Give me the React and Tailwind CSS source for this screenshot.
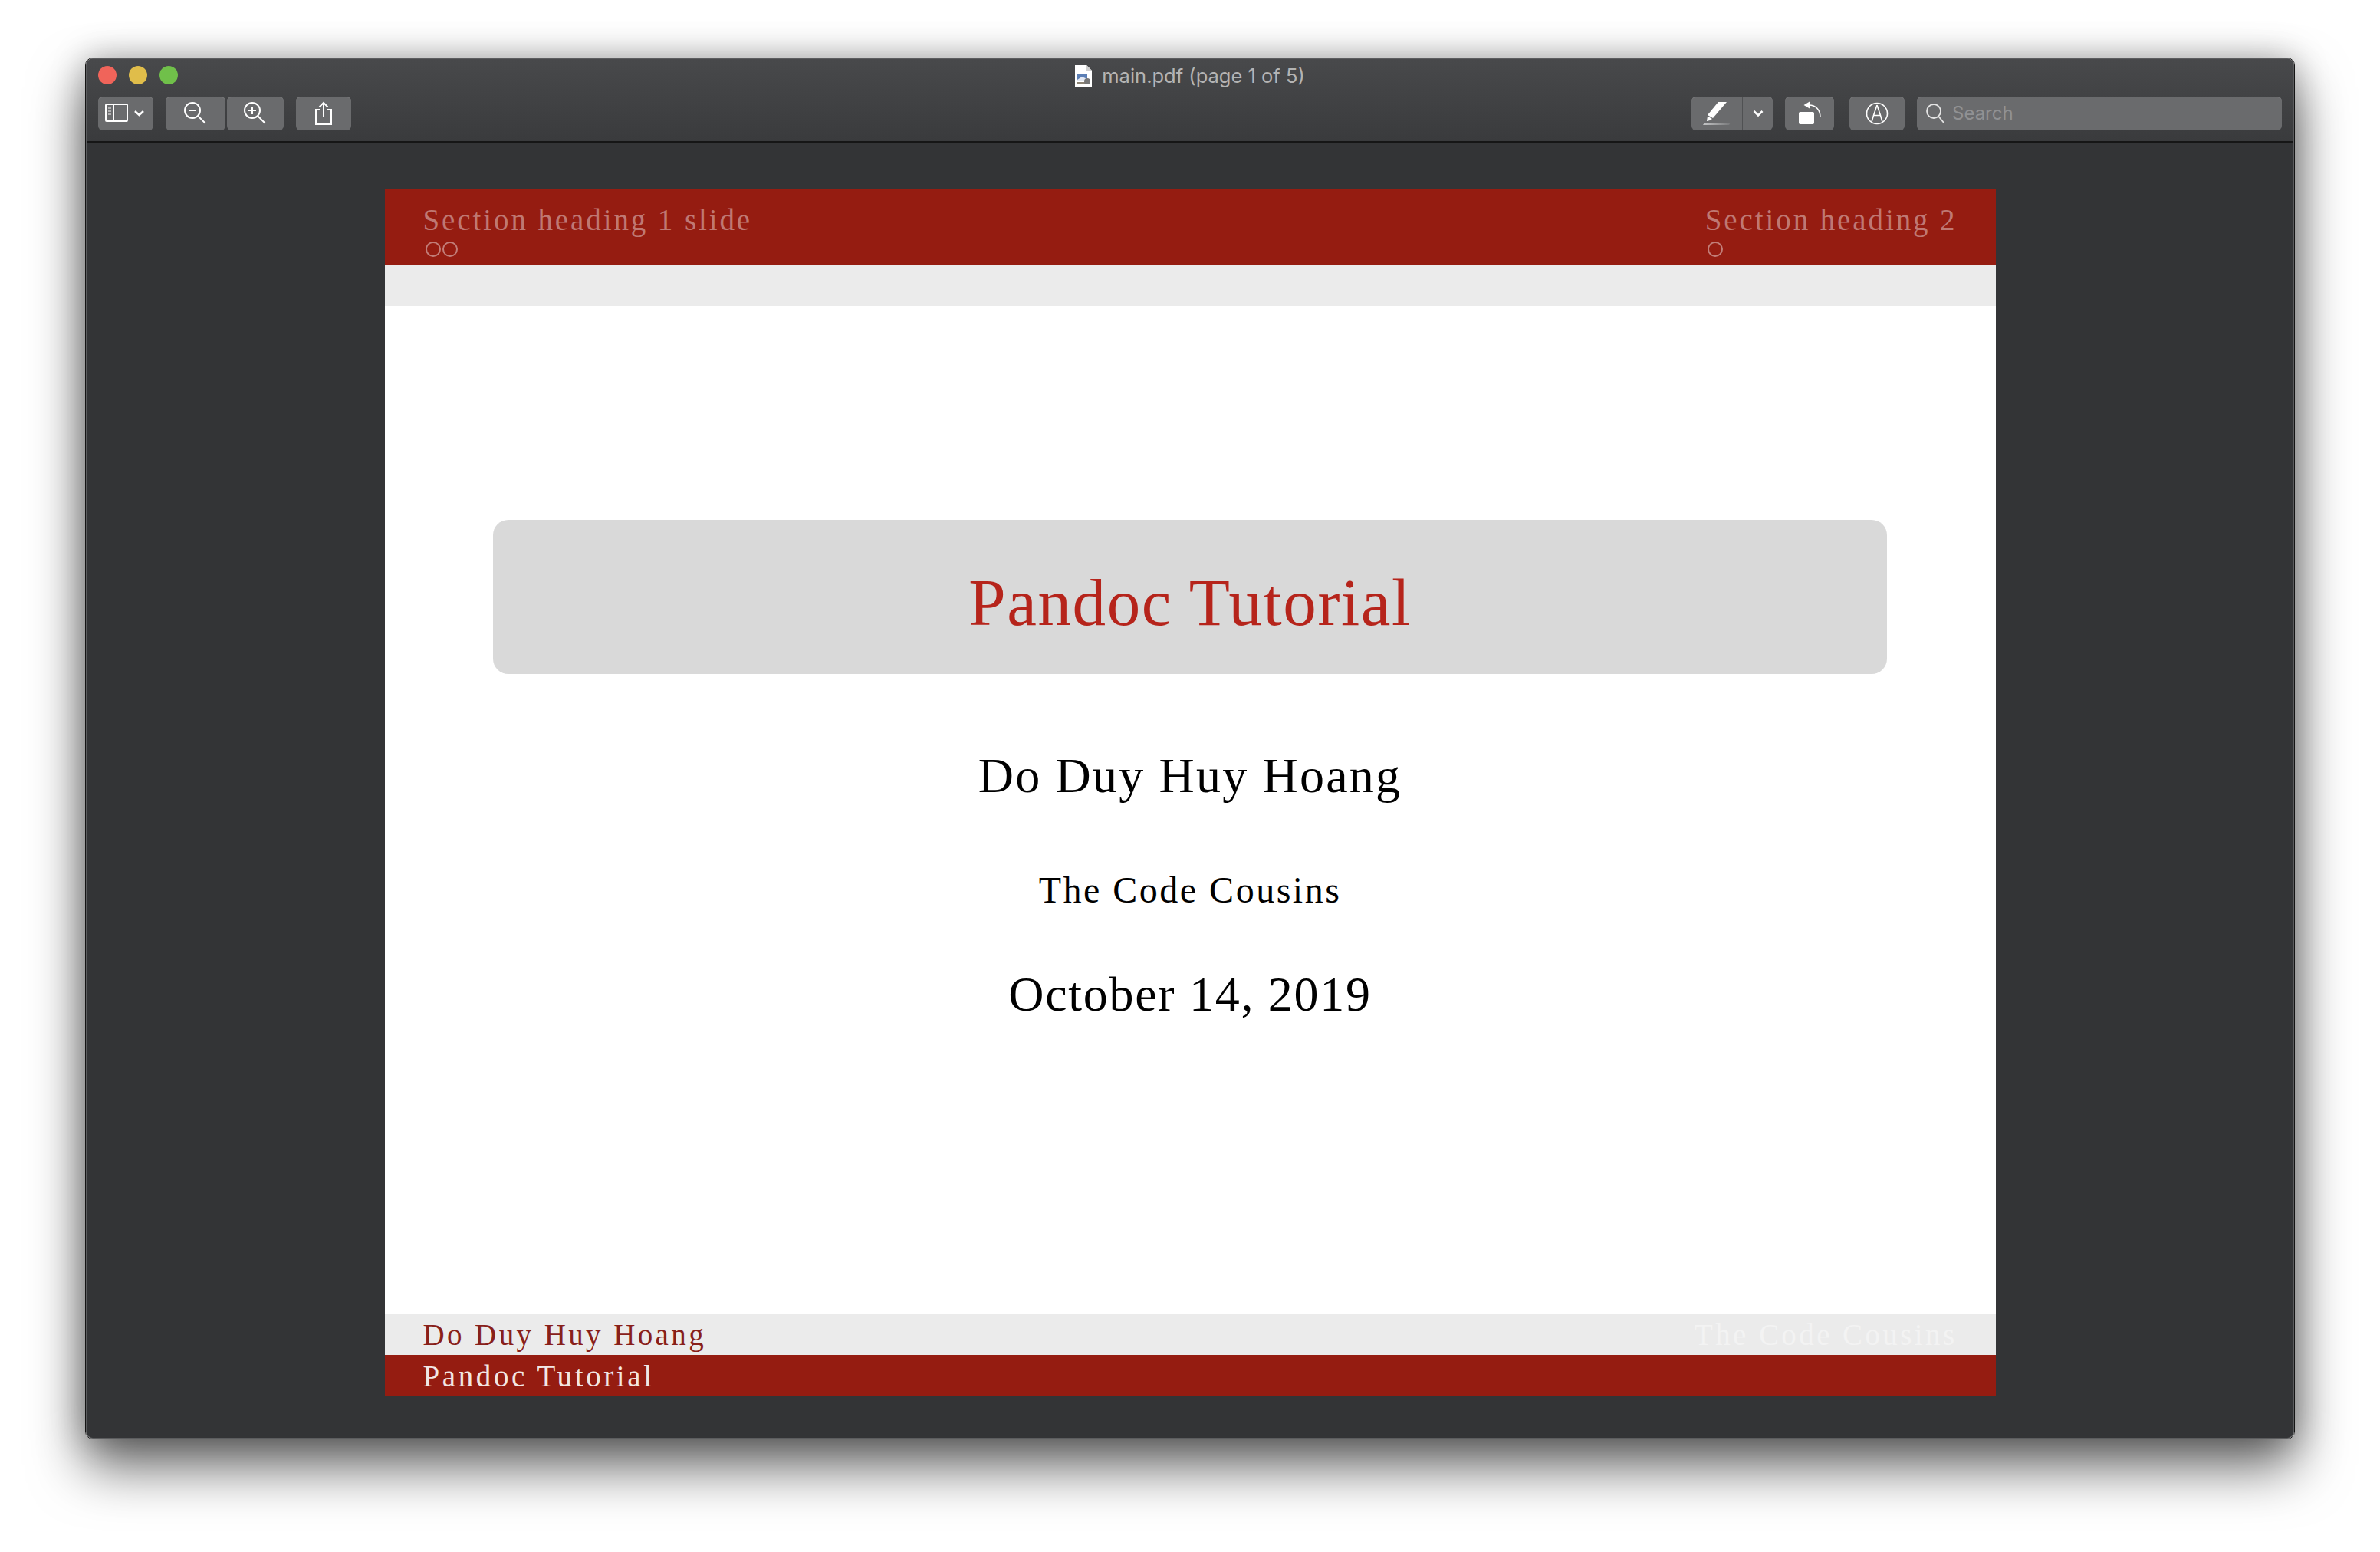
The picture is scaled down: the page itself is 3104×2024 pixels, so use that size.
import React from 'react';

const cm = "font-['Liberation_Serif',serif]";

const ToolBtn = ({ className = '', children }) => (
  <div className={`h-[44px] rounded-[6px] bg-[#6a6b6d] shadow-[inset_0_1px_0_#77787a] flex items-center justify-center ${className}`}>
    {children}
  </div>
);

const SidebarIcon = () => (
  <svg width="54" height="28" viewBox="0 0 54 28" fill="none" stroke="#fff">
    <rect x="1" y="2" width="28" height="22" rx="1" strokeWidth="2" />
    <path d="M11 2v22" strokeWidth="2" />
    <path d="M4 7h4M4 11h4M4 15h4" strokeWidth="1.6" stroke="#c9c9c9" />
    <path d="M39 11l5.5 5 5.5-5" strokeWidth="2.6" />
  </svg>
);

const ZoomIcon = ({ plus }) => (
  <svg width="32" height="32" viewBox="0 0 32 32" fill="none" stroke="#fff" strokeWidth="2">
    <circle cx="12" cy="12" r="10" />
    <path d="M19.5 19.5L29 29" />
    <path d="M7 12h10" />
    {plus && <path d="M12 7v10" />}
  </svg>
);

const ShareIcon = () => (
  <svg width="24" height="32" viewBox="0 0 24 32" fill="none" stroke="#fff" strokeWidth="2">
    <path d="M7 11H2v19h20V11h-5" />
    <path d="M12 21V2M6.5 7.5L12 2l5.5 5.5" />
  </svg>
);

const HighlightIcon = () => (
  <svg width="38" height="32" viewBox="0 0 38 32">
    <defs>
      <linearGradient id="hl" x1="0" x2="1" y1="0" y2="0">
        <stop offset="0" stopColor="#c4c5c6" />
        <stop offset="1" stopColor="#77787a" />
      </linearGradient>
    </defs>
    <path d="M21 1h11L14 22l-7-4z" fill="#fff" />
    <path d="M7 19.5l6 3.5-3 2-4 1z" fill="#fff" />
    <path d="M3 28h34l-2 3H1z" fill="url(#hl)" />
  </svg>
);

const Chevron = () => (
  <svg width="14" height="10" viewBox="0 0 14 10" fill="none" stroke="#fff" strokeWidth="2.6">
    <path d="M1.5 2l5.5 5.5L12.5 2" />
  </svg>
);

const RotateIcon = () => (
  <svg width="30" height="32" viewBox="0 0 30 32" fill="none">
    <rect x="1" y="14" width="20" height="16" rx="2" fill="#fff" />
    <path d="M14 5c9 0 15 6 15 16" stroke="#fff" strokeWidth="1.6" />
    <path d="M15 0.5v9L7.5 5z" fill="#fff" />
  </svg>
);

const MarkupIcon = () => (
  <svg width="30" height="30" viewBox="0 0 30 30" fill="none" stroke="#fff" strokeWidth="1.6">
    <circle cx="15" cy="15" r="13.5" />
    <path d="M15 4L10.5 17.5 8 26M15 4l4.5 13.5L22 26M10.5 17.5h9" />
  </svg>
);

const SearchIcon = () => (
  <svg width="26" height="28" viewBox="0 0 26 28" fill="none" stroke="#e4e4e4" strokeWidth="1.8">
    <circle cx="11" cy="11" r="9" />
    <path d="M17.5 18L24 26" />
  </svg>
);

const FileIcon = () => (
  <svg width="22" height="29" viewBox="0 0 22 29" className="shrink-0">
    <path d="M0 0h15l7 7v22H0z" fill="#fff" />
    <path d="M15 0l7 7h-7z" fill="#cfcfcf" />
    <rect x="3" y="12" width="13" height="9" fill="#5c7fb5" />
    <path d="M3 19l6-4 7 3v3H3z" fill="#e3e8f2" />
    <rect x="3" y="22" width="14" height="3" fill="#8c8474" />
    <circle cx="16" cy="21" r="4" fill="#777" />
  </svg>
);

const Rings = ({ count }) => (
  <div className="flex gap-[2px] ml-[3px] mt-[9px]">
    {Array.from({ length: count }).map((_, i) => (
      <div key={i} className="w-[20px] h-[20px] rounded-full border-[2px] border-[#c27e79]" />
    ))}
  </div>
);

const App = () => {
  return (
    <div className="w-[3104px] h-[2024px] bg-white overflow-hidden pl-[111px] pt-[75px]">
      <div className="w-[2882px] h-[1802px] rounded-[10px] border border-[#141414] shadow-[0_36px_70px_rgba(0,0,0,0.6),0_0_44px_rgba(0,0,0,0.28)]">
        <div className="w-full h-full flex flex-col rounded-[9px] overflow-hidden border border-[#5c5d5f] bg-[#333436]">
          {/* title + toolbar */}
          <div className="h-[109px] shrink-0 bg-gradient-to-b from-[#48494b] to-[#3a3b3d] border-b-[2px] border-[#161616] px-[15px] flex flex-col">
            <div className="h-[49px] shrink-0 relative flex items-center justify-center pb-[5px]">
              <div className="absolute left-[0px] top-[9px] flex gap-[16px]">
                <div className="w-[24px] h-[24px] rounded-full bg-[#f0645a]" />
                <div className="w-[24px] h-[24px] rounded-full bg-[#e0bd4a]" />
                <div className="w-[24px] h-[24px] rounded-full bg-[#70c04a]" />
              </div>
              <div className="flex items-center gap-[13px]">
                <FileIcon />
                <span className="font-['Inter',sans-serif] text-[25.5px] leading-none text-[#b4b4b4]">main.pdf (page 1 of 5)</span>
              </div>
            </div>
            <div className="flex items-start">
              <ToolBtn className="w-[72px]"><SidebarIcon /></ToolBtn>
              <ToolBtn className="w-[78px] ml-[16px]"><ZoomIcon /></ToolBtn>
              <ToolBtn className="w-[74px] ml-[2px]"><ZoomIcon plus /></ToolBtn>
              <ToolBtn className="w-[72px] ml-[16px]"><ShareIcon /></ToolBtn>
              <div className="flex-1" />
              <div className="h-[44px] w-[106px] rounded-[6px] bg-[#6a6b6d] shadow-[inset_0_1px_0_#77787a] flex">
                <div className="w-[67px] flex items-center justify-center border-r-[1px] border-[#505153]"><HighlightIcon /></div>
                <div className="flex-1 flex items-center justify-center"><Chevron /></div>
              </div>
              <ToolBtn className="w-[64px] ml-[16px]"><RotateIcon /></ToolBtn>
              <ToolBtn className="w-[72px] ml-[20px]"><MarkupIcon /></ToolBtn>
              <div className="h-[44px] w-[476px] ml-[16px] rounded-[6px] bg-[#6a6b6d] shadow-[inset_0_1px_0_#77787a] flex items-center pl-[11px] gap-[9px]">
                <SearchIcon />
                <span className="font-['Inter',sans-serif] text-[24px] leading-none text-[#909193]">Search</span>
              </div>
            </div>
          </div>

          {/* pdf view */}
          <div className="flex-1 flex justify-center pt-[60px]">
            <div className={`w-[2101px] h-[1575px] bg-white flex flex-col ${cm}`}>
              <div className="h-[99px] shrink-0 bg-[#951c11] px-[50px] pt-[22px] flex justify-between text-[#bf7873] text-[39px] leading-[38px] tracking-[2.9px]">
                <div>
                  <div>Section heading 1 slide</div>
                  <Rings count={2} />
                </div>
                <div>
                  <div>Section heading 2</div>
                  <Rings count={1} />
                </div>
              </div>
              <div className="h-[54px] shrink-0 bg-[#ebebeb]" />

              <div className="flex-1 flex flex-col items-center text-black">
                <div className="w-[1818px] h-[201px] mt-[279px] rounded-[20px] bg-[#d9d9d9] flex items-center justify-center pt-[14px]">
                  <span className="text-[#b6241b] text-[87px] leading-none tracking-[1.6px]">Pandoc Tutorial</span>
                </div>
                <div className="mt-[95px] text-[64px] leading-[76px] tracking-[2.2px]">Do Duy Huy Hoang</div>
                <div className="mt-[84px] text-[48px] leading-[54px] tracking-[2.5px]">The Code Cousins</div>
                <div className="mt-[71px] text-[64px] leading-[76px] tracking-[1.7px]">October 14, 2019</div>
              </div>

              <div className="h-[54px] shrink-0 bg-[#ebebeb] px-[50px] flex items-center justify-between text-[39px] leading-none tracking-[3.4px]">
                <span className="text-[#88201a]">Do Duy Huy Hoang</span>
                <span className="text-[#f3f3f3]">The Code Cousins</span>
              </div>
              <div className="h-[54px] shrink-0 bg-[#951c11] px-[50px] flex items-center text-[39px] leading-none tracking-[3.6px] text-[#f2e6e4]">
                Pandoc Tutorial
              </div>
            </div>
          </div>
        </div>
      </div>
    </div>
  );
};

export default App;
